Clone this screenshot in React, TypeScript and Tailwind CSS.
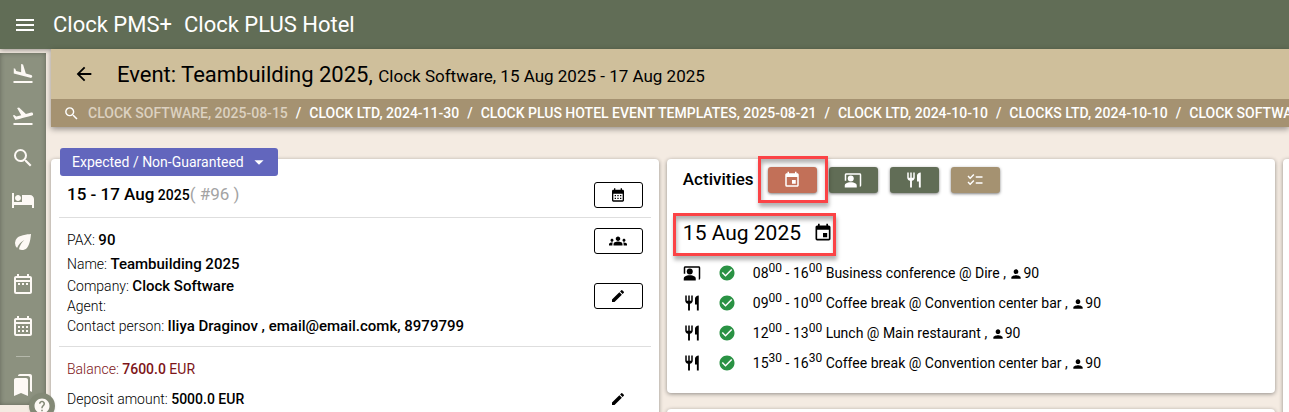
import React from "react";
import clsx from "clsx";
import {
  MdArrowBack,
  MdArrowDropDown,
  MdBookmarks,
  MdCalendarMonth,
  MdCheckCircle,
  MdChecklist,
  MdCoPresent,
  MdEco,
  MdEdit,
  MdEvent,
  MdFlightLand,
  MdFlightTakeoff,
  MdGroups,
  MdHelp,
  MdHotel,
  MdMenu,
  MdOutlineCalendarMonth,
  MdOutlineDateRange,
  MdPerson,
  MdRestaurant,
  MdSearch,
} from "react-icons/md";

const navItems = [
  { label: "Arrivals", Icon: MdFlightLand },
  { label: "Departures", Icon: MdFlightTakeoff },
  { label: "Search", Icon: MdSearch },
  { label: "Rooms", Icon: MdHotel },
  { label: "Housekeeping", Icon: MdEco },
  { label: "Week", Icon: MdOutlineDateRange },
  { label: "Month", Icon: MdOutlineCalendarMonth },
];

const recentEvents = [
  "CLOCK SOFTWARE, 2025-08-15",
  "CLOCK LTD, 2024-11-30",
  "CLOCK PLUS HOTEL EVENT TEMPLATES, 2025-08-21",
  "CLOCK LTD, 2024-10-10",
  "CLOCKS LTD, 2024-10-10",
  "CLOCK SOFTWARE, 2024-10-10",
];

const activities = [
  { Icon: MdCoPresent, from: ["08", "00"], to: ["16", "00"], title: "Business conference @ Dire", pax: 90 },
  { Icon: MdRestaurant, from: ["09", "00"], to: ["10", "00"], title: "Coffee break @ Convention center bar", pax: 90 },
  { Icon: MdRestaurant, from: ["12", "00"], to: ["13", "00"], title: "Lunch @ Main restaurant", pax: 90 },
  { Icon: MdRestaurant, from: ["15", "30"], to: ["16", "30"], title: "Coffee break @ Convention center bar", pax: 90 },
];

const Card = ({ className, children }: { className?: string; children?: React.ReactNode }) => (
  <section
    className={clsx("rounded bg-white shadow-[0_1px_4px_rgba(0,0,0,0.4)]", className)}
  >
    {children}
  </section>
);

const OutlineButton = ({ label, children }: { label: string; children: React.ReactNode }) => (
  <button
    aria-label={label}
    className="flex h-[26px] w-[49px] shrink-0 items-center justify-center rounded-[3px] border border-black"
  >
    {children}
  </button>
);

const ActionButton = ({
  label,
  color,
  children,
}: {
  label: string;
  color: string;
  children: React.ReactNode;
}) => (
  <button
    aria-label={label}
    className={clsx(
      "flex h-[26px] w-[49px] items-center justify-center rounded-[3px] text-white shadow-[0_1px_3px_rgba(0,0,0,0.5)]",
      color
    )}
  >
    {children}
  </button>
);

// Red frame drawn around the parent to call attention to it
const Highlight = ({ className }: { className: string }) => (
  <span
    className={clsx(
      "pointer-events-none absolute border-3 border-[#fb4346] shadow-[1px_4px_4px_rgba(0,0,0,0.3),inset_1px_4px_4px_rgba(0,0,0,0.3)]",
      className
    )}
  />
);

const Sidebar = () => (
  <nav className="relative z-10 mt-1 flex h-[352px] w-[46px] shrink-0 flex-col items-center bg-[#8c917f] pt-[9px] text-[#fdf9f5] shadow-[inset_0_0_5px_rgba(0,0,0,0.3)]">
    {navItems.map(({ label, Icon }) => (
      <a key={label} href="#" aria-label={label} className="flex h-[42px] items-start justify-center">
        <Icon className="size-6" />
      </a>
    ))}
    <hr className="w-[14px] border-[#b5b8ab]" />
    <a href="#" aria-label="Bookmarks" className="mt-4">
      <MdBookmarks className="size-6" />
    </a>
    <button
      aria-label="Help"
      className="absolute -right-[9px] -bottom-[14px] flex size-[26px] items-center justify-center rounded-full bg-[#838976] text-[#fdf9f5] shadow"
    >
      <MdHelp className="size-[18px]" />
    </button>
  </nav>
);

const EventCard = () => (
  <Card className="basis-[49.1%] shrink-0 px-2 text-sm">
    <button className="-mt-[11px] ml-px flex h-7 items-center gap-1 rounded-[3px] bg-[#6266bd] pr-2 pl-3 text-white">
      Expected / Non-Guaranteed
      <MdArrowDropDown className="size-[22px]" />
    </button>

    <div className="flex h-[42px] items-center justify-between border-b border-[#dedede] px-2 pb-1">
      <p>
        <span className="text-[17px] font-medium">15 - 17 Aug</span>{" "}
        <span className="font-medium">2025</span>
        <span className="text-[17px] text-[#a3a3a3]">( #96 )</span>
      </p>
      <OutlineButton label="Change dates">
        <MdCalendarMonth className="size-4" />
      </OutlineButton>
    </div>

    <div className="flex justify-between border-b border-[#dedede] px-2 py-2.5 font-light">
      <div>
        <p className="leading-6">
          PAX: <b className="text-[15px] font-medium">90</b>
        </p>
        <p className="leading-6">
          Name: <b className="text-[15px] font-medium">Teambuilding 2025</b>
        </p>
        <p className="leading-5">
          Company: <b className="text-[15px] font-medium">Clock Software</b>
        </p>
        <p className="leading-5">Agent:</p>
        <p className="leading-5">
          Contact person:{" "}
          <b className="text-[15px] font-medium">Iliya Draginov , email@email.comk, 8979799</b>
        </p>
      </div>
      <div className="flex flex-col gap-[29px]">
        <OutlineButton label="Edit guests">
          <MdGroups className="size-[18px]" />
        </OutlineButton>
        <OutlineButton label="Edit event">
          <MdEdit className="size-4" />
        </OutlineButton>
      </div>
    </div>

    <div className="px-2 pt-3 font-light">
      <p className="leading-5 text-[#7d1518]">
        Balance: <b className="font-medium">7600.0</b> <span className="font-normal">EUR</span>
      </p>
      <div className="mt-2 flex items-center justify-between">
        <p className="leading-6">
          Deposit amount: <b className="font-medium">5000.0 EUR</b>
        </p>
        <button aria-label="Edit deposit" className="flex w-[49px] justify-center">
          <MdEdit className="size-4" />
        </button>
      </div>
    </div>
  </Card>
);

const ActivitiesCard = () => (
  <Card className="px-4 pt-2 pb-[15px] text-sm">
    <div className="flex items-start">
      <h2 className="w-[85px] text-[17px] leading-6 font-medium">Activities</h2>
      <div className="flex gap-3">
        <div className="relative">
          <ActionButton label="All activities" color="bg-[#c27058]">
            <MdEvent className="size-[18px]" />
          </ActionButton>
          <Highlight className="-top-[11px] -right-[11px] -bottom-[10px] -left-[10px]" />
        </div>
        <ActionButton label="Conferences" color="bg-[#616d56]">
          <MdCoPresent className="size-[18px]" />
        </ActionButton>
        <ActionButton label="Catering" color="bg-[#616d56]">
          <MdRestaurant className="size-[18px]" />
        </ActionButton>
        <ActionButton label="Tasks" color="bg-[#a59271]">
          <MdChecklist className="size-[18px]" />
        </ActionButton>
      </div>
    </div>

    <div className="relative mt-[26px] flex w-fit items-center gap-3">
      <h3 className="text-[21px] leading-7">15 Aug 2025</h3>
      <button aria-label="Pick date">
        <MdEvent className="size-5" />
      </button>
      <Highlight className="-top-[6px] -right-[3px] -bottom-[9px] -left-[10px]" />
    </div>

    <ul className="mt-[11px]">
      {activities.map(({ Icon, from, to, title, pax }) => (
        <li key={from[0]} className="flex h-[30px] items-center">
          <Icon className="size-[18px]" />
          <MdCheckCircle className="ml-[17px] size-[18px] text-[#2a9244]" />
          <p className="ml-[17px]">
            {from[0]}
            <sup className="text-xs">{from[1]}</sup> - {to[0]}
            <sup className="text-xs">{to[1]}</sup> {title} ,{" "}
            <MdPerson className="inline size-[14px]" />
            {pax}
          </p>
        </li>
      ))}
    </ul>
  </Card>
);

const App: React.FC = () => {
  return (
    <div className="flex h-screen flex-col overflow-hidden bg-[#f4ebe2] font-[Roboto,sans-serif] text-black">
      <header className="flex h-[49px] shrink-0 items-center bg-[#616d56] pl-[13px] text-[22px] text-white shadow-[0_1px_5px_rgba(0,0,0,0.4)]">
        <button aria-label="Menu">
          <MdMenu className="size-6" />
        </button>
        <span className="ml-4">Clock PMS+</span>
        <span className="ml-3">Clock PLUS Hotel</span>
      </header>

      <div className="flex min-h-0 flex-1 gap-[5px]">
        <Sidebar />

        <main className="z-0 min-w-0 flex-1">
          <div className="shadow-[0_2px_6px_rgba(0,0,0,0.4)]">
            <div className="flex h-[50px] items-center bg-[#cfbf9b] pl-[22px]">
              <a href="#" aria-label="Back">
                <MdArrowBack className="size-[22px]" />
              </a>
              <h1 className="ml-[22px] text-[22px]">
                Event: Teambuilding 2025,{" "}
                <span className="text-[17px]">Clock Software, 15 Aug 2025 - 17 Aug 2025</span>
              </h1>
            </div>
            <div className="flex h-7 items-center overflow-hidden bg-[#a59271] pl-3 text-sm font-medium whitespace-nowrap text-white">
              <MdSearch className="mr-2 size-[17px] shrink-0" />
              {recentEvents.map((event, i) => (
                <React.Fragment key={i}>
                  {i > 0 && <span className="px-2">/</span>}
                  <a href="#" className={clsx(i === 0 && "text-[#dcd1c0]")}>
                    {event}
                  </a>
                </React.Fragment>
              ))}
            </div>
          </div>

          <div className="mt-8 flex h-full gap-2">
            <EventCard />
            <div className="flex shrink-0 basis-[49.1%] flex-col gap-4">
              <ActivitiesCard />
              <Card className="flex-1" />
            </div>
            <Card className="basis-[49.1%] shrink-0" />
          </div>
        </main>
      </div>
    </div>
  );
};

export default App;
